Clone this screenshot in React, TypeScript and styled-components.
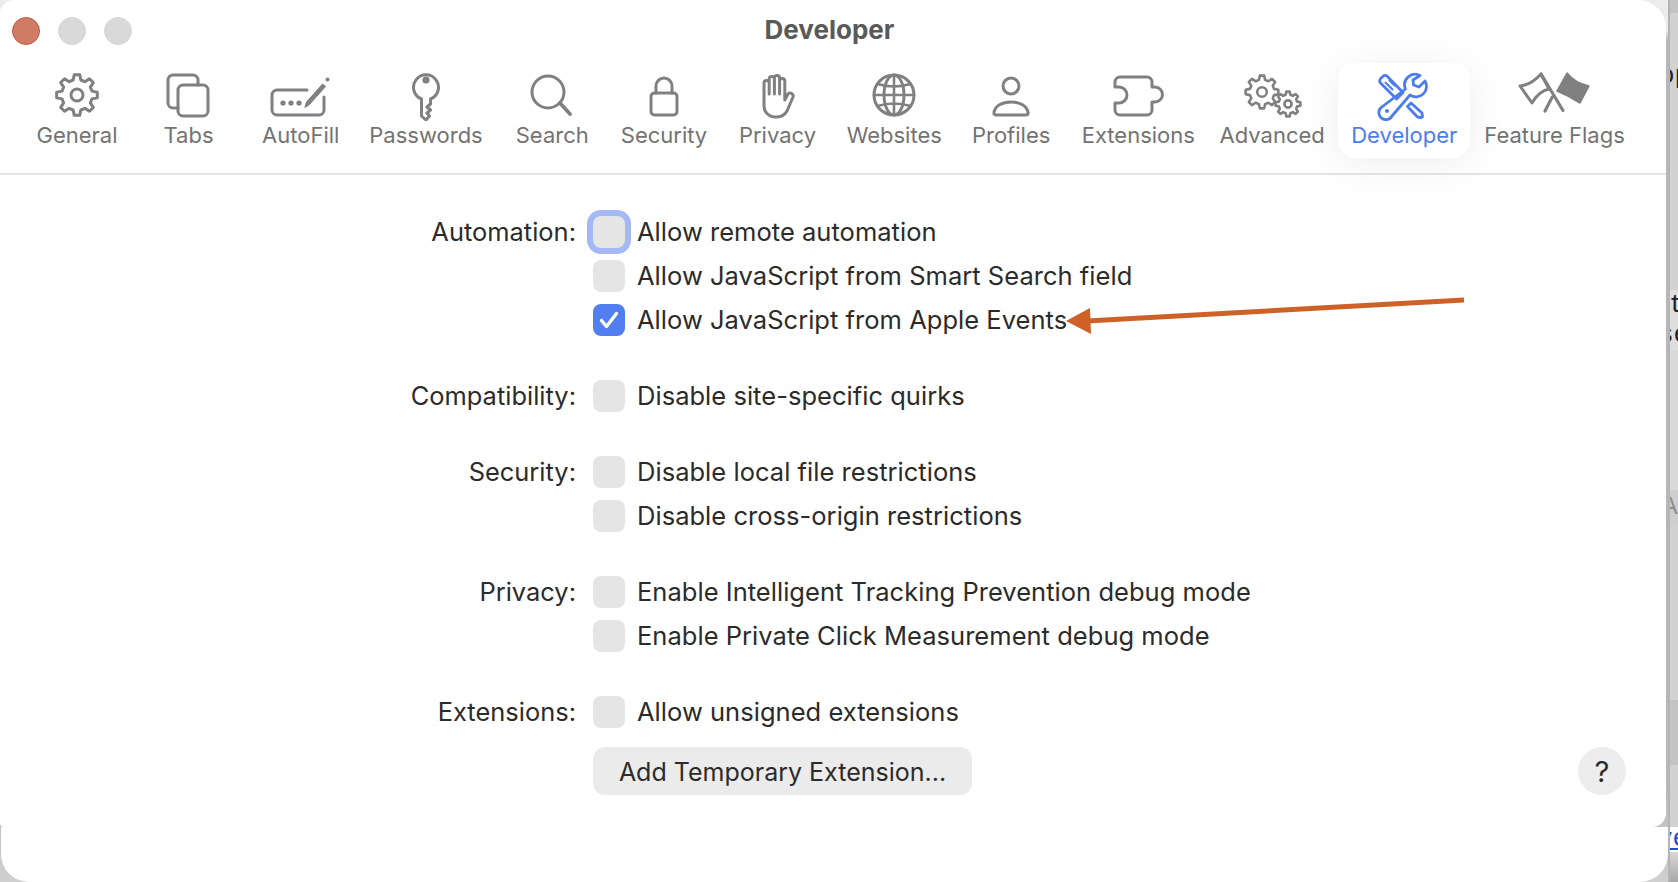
import styled, { createGlobalStyle } from 'styled-components'

const GlobalStyle = createGlobalStyle`
  html, body {
    margin: 0;
    padding: 0;
    width: 1678px;
    height: 882px;
    overflow: hidden;
    background: #d2d2d2;
    font-family: Inter, "Liberation Sans", sans-serif;
  }
`

function gearPath (cx: number, cy: number, rOut: number, rIn: number, teeth: number) {
  const step = (Math.PI * 2) / teeth
  const pts: string[] = []
  for (let i = 0; i < teeth; i++) {
    const a = i * step - Math.PI / 2
    const angles: [number, number][] = [
      [a - step * 0.32, rIn],
      [a - step * 0.17, rOut],
      [a + step * 0.17, rOut],
      [a + step * 0.32, rIn]
    ]
    angles.forEach(([t, r]) => pts.push(`${(cx + Math.cos(t) * r).toFixed(2)} ${(cy + Math.sin(t) * r).toFixed(2)}`))
  }
  return `M${pts.join(' L')} Z`
}

const icons: Record<string, React.ReactNode> = {
  General: (
    <>
      <path d={gearPath(32, 26, 20.5, 15.5, 8)} />
      <circle cx='32' cy='26' r='6' />
    </>
  ),
  Tabs: (
    <>
      <path d='M21 39 H16 a5 5 0 0 1 -5 -5 V11 a5 5 0 0 1 5 -5 H36 a5 5 0 0 1 5 5 V16' />
      <rect x='21' y='16' width='30' height='31' rx='5' />
    </>
  ),
  AutoFill: (
    <>
      <path d='M38 21 H8 a5 5 0 0 0 -5 5 V41 a5 5 0 0 0 5 5 H50 a5 5 0 0 0 5 -5 V28' />
      <path d='M36 38 l1.5 -5 l16 -18 l3 2.5 l-16 18 z' fill='currentColor' strokeWidth='1' />
      <circle cx='58.5' cy='10.5' r='2' fill='currentColor' stroke='none' />
      <circle cx='14' cy='34' r='2.6' fill='currentColor' stroke='none' />
      <circle cx='22' cy='34' r='2.6' fill='currentColor' stroke='none' />
      <circle cx='30' cy='34' r='2.6' fill='currentColor' stroke='none' />
    </>
  ),
  Passwords: (
    <>
      <path d='M27.5 30 A12.5 12.5 0 1 1 36.5 30 V35 L33 38 L36.5 41 L33 44 L35.5 47 L32 51 L27.5 47 Z' />
      <circle cx='32' cy='11' r='3.6' fill='currentColor' stroke='none' />
    </>
  ),
  Search: (
    <>
      <circle cx='28' cy='23' r='16' />
      <path d='M40 34 L50 45' strokeWidth='3.8' />
    </>
  ),
  Security: (
    <>
      <rect x='19' y='24' width='26' height='22' rx='3.5' />
      <path d='M24 24 V17 a8 8 0 0 1 16 0 V24' />
    </>
  ),
  Privacy: (
    <path d='M18 32 V14 a2.6 2.6 0 0 1 5.2 0 V25 M23.2 14 V10 a2.6 2.6 0 0 1 5.2 0 V25 M28.4 10 V9 a2.6 2.6 0 0 1 5.2 0 V25 M33.6 12 a2.6 2.6 0 0 1 5.2 0 V31 L42 25 a3 3 0 0 1 5 3 L41 42 a12 12 0 0 1 -10 6 H29 a11 11 0 0 1 -11 -11 V30' />
  ),
  Websites: (
    <>
      <circle cx='32' cy='26' r='20' />
      <ellipse cx='32' cy='26' rx='10' ry='20' />
      <path d='M32 6 V46 M12 26 H52 M15.5 15 Q32 20 48.5 15 M15.5 37 Q32 32 48.5 37' strokeWidth='2.6' />
    </>
  ),
  Profiles: (
    <>
      <circle cx='32' cy='17' r='8' />
      <path d='M17 46 h30 c1.5 0 2.4 -1 2 -2.5 C48 37 41 33 32 33 S16 37 15 43.5 c-.3 1.5 .5 2.5 2 2.5 z' />
    </>
  ),
  Extensions: (
    <path d='M14 8 H41 a5 5 0 0 1 5 5 V18 h3 a7.5 7.5 0 0 1 0 15 h-3 V41 a5 5 0 0 1 -5 5 H14 a5 5 0 0 1 -5 -5 V34 h4 a8 8 0 0 0 0 -16 h-4 V13 a5 5 0 0 1 5 -5 z' />
  ),
  Advanced: (
    <g strokeWidth='2.6'>
      <path d={gearPath(22, 23, 16.5, 12.5, 8)} />
      <circle cx='22' cy='23' r='4.8' />
      <path d={gearPath(48, 35, 12.5, 9.5, 8)} />
      <circle cx='48' cy='35' r='3.6' />
    </g>
  ),
  Developer: (
    <g strokeWidth='2.8'>
      <path d='M8.5 14 a3 3 0 0 1 0 -4.2 l2.5 -2.5 a3 3 0 0 1 4.2 0 L31 23.5 L24.5 30 Z' />
      <path d='M13.5 13.5 l7 7 M17.5 11.5 l5 5' strokeWidth='2' />
      <path d='M39 34 L35.5 37.5 L45.5 48 L49.5 48.5 a1.5 1.5 0 0 0 1 -1 L50 44 Z' />
      <path d='M48 6.5 A10.5 10.5 0 0 0 33.5 20 L10.5 37.5 A7 7 0 1 0 20 47 L38 26 A10.5 10.5 0 0 0 53 12 L47 18 L41.5 16 L41 11 Z' />
      <circle cx='15' cy='42' r='2' fill='currentColor' stroke='none' />
    </g>
  ),
  'Feature Flags': (
    <>
      <path d='M3 17 Q14 16 24 5 L32 20 Q22 22 15 34 Z' />
      <path d='M24 5 L46 41.5 M35 28.5 L28 42' strokeWidth='3.2' />
      <path d='M50 4 Q58 14 72 17 L63 34 Q52 27 40 22 Z' fill='currentColor' strokeWidth='1.5' />
    </>
  )
}

const tools = [
  { name: 'General', width: 112 },
  { name: 'Tabs', width: 111 },
  { name: 'AutoFill', width: 113.5 },
  { name: 'Passwords', width: 137 },
  { name: 'Search', width: 115.5 },
  { name: 'Security', width: 108 },
  { name: 'Privacy', width: 119 },
  { name: 'Websites', width: 114.5 },
  { name: 'Profiles', width: 119.3 },
  { name: 'Extensions', width: 135 },
  { name: 'Advanced', width: 132.7 },
  { name: 'Developer', width: 131.6, active: true },
  { name: 'Feature Flags', width: 169, iconWidth: 76 }
]

const groups = [
  {
    label: 'Automation:',
    options: [
      { text: 'Allow remote automation', focused: true },
      { text: 'Allow JavaScript from Smart Search field' },
      { text: 'Allow JavaScript from Apple Events', checked: true }
    ]
  },
  { label: 'Compatibility:', options: [{ text: 'Disable site-specific quirks' }] },
  {
    label: 'Security:',
    options: [{ text: 'Disable local file restrictions' }, { text: 'Disable cross-origin restrictions' }]
  },
  {
    label: 'Privacy:',
    options: [
      { text: 'Enable Intelligent Tracking Prevention debug mode' },
      { text: 'Enable Private Click Measurement debug mode' }
    ]
  }
]

const strip = [
  { height: 13, bg: '#c4c4c4' },
  { height: 49, bg: '#d2d2d2' },
  { height: 28, bg: '#d2d2d2', text: 'op', indent: -11 },
  { height: 200, bg: '#d2d2d2' },
  { height: 30, bg: '#dedede', text: 'te', indent: -1 },
  { height: 30, bg: '#dedede', text: 'se', indent: -12 },
  { height: 140, bg: '#d9d9d9' },
  { height: 35, bg: '#cecece', text: 'AI', faded: true, indent: -8 },
  { height: 175, bg: '#d2d2d2' },
  { height: 65, bg: '#c4c4c4' },
  { height: 62, bg: '#d2d2d2' },
  { height: 25, bg: '#ffffff', text: 've', link: true, indent: -13 },
  { height: 30, bg: 'linear-gradient(180deg, #d8d8d8, #a8a8a8)' }
]

export default function App () {
  return (
    <>
      <GlobalStyle />
      <Frame>
        <Column>
          <Window>
            <Toolbar>
              <TitleBar>
                <Lights>
                  <Light $red />
                  <Light />
                  <Light />
                </Lights>
                <Title>Developer</Title>
              </TitleBar>
              <Tools>
                {tools.map((tool) => (
                  <Tool key={tool.name} $width={tool.width} $active={tool.active}>
                    <ToolIcon width={tool.iconWidth || 64} height='52' viewBox={`0 0 ${tool.iconWidth || 64} 52`} $active={tool.active}>
                      {icons[tool.name]}
                    </ToolIcon>
                    <ToolLabel>{tool.name}</ToolLabel>
                  </Tool>
                ))}
              </Tools>
            </Toolbar>
            <Content>
              {groups.map((group) => (
                <Group key={group.label}>
                  <GroupLabel>{group.label}</GroupLabel>
                  <Options>
                    {group.options.map((option) => (
                      <Option key={option.text}>
                        <Checkbox $checked={option.checked} $focused={option.focused}>
                          {option.checked && (
                            <svg width='32' height='32' viewBox='0 0 32 32' fill='none'>
                              <path d='M8.5 16.5 L13.5 22.5 L23.5 9.5' stroke='#fff' strokeWidth='3.4' strokeLinecap='round' strokeLinejoin='round' />
                            </svg>
                          )}
                        </Checkbox>
                        <OptionText>{option.text}</OptionText>
                      </Option>
                    ))}
                  </Options>
                </Group>
              ))}
              <Group>
                <GroupLabel>Extensions:</GroupLabel>
                <Options>
                  <Option>
                    <Checkbox />
                    <OptionText>Allow unsigned extensions</OptionText>
                  </Option>
                  <Actions>
                    <AddButton>Add Temporary Extension...</AddButton>
                    <HelpButton>?</HelpButton>
                  </Actions>
                </Options>
              </Group>
            </Content>
            <Arrow width='420' height='40' viewBox='0 0 420 40'>
              <path d='M22 24 L399 3' stroke='#cd6128' strokeWidth='5' />
              <path d='M1 24 L25 11 L26 37 Z' fill='#cd6128' />
            </Arrow>
          </Window>
          <LowerSheet />
        </Column>
        <Strip>
          {strip.map((row, i) => (
            <StripRow key={i} $height={row.height} $bg={row.bg} $faded={row.faded} $link={row.link} $indent={row.indent}>
              {row.text}
            </StripRow>
          ))}
        </Strip>
      </Frame>
    </>
  )
}

const Frame = styled.div`
  display: flex;
  width: 1678px;
  height: 882px;
  overflow: hidden;
`

const Column = styled.div`
  display: flex;
  flex-direction: column;
  width: 1668px;
  flex-shrink: 0;
  background: linear-gradient(180deg, #ececec 0, #ececec 30px, #b8b8b8 40px, #b8b8b8 780px, #d0d0d0 100%);
`

const Window = styled.div`
  position: relative;
  width: 1666px;
  height: 827px;
  background: #fff;
  border-radius: 14px 28px 14px 4px;
`

const LowerSheet = styled.div`
  height: 55px;
  margin-left: 1px;
  background: #fff;
  border-radius: 0 0 28px 28px;
`

const Toolbar = styled.header`
  height: 173px;
  border-bottom: 2px solid #e6e6e6;
`

const TitleBar = styled.div`
  display: grid;
  grid-template-columns: 1fr auto 1fr;
  align-items: center;
  height: 62px;
  padding: 0 19px 0 12px;
`

const Lights = styled.div`
  display: flex;
  gap: 18px;
`

const Light = styled.span<{ $red?: boolean }>`
  box-sizing: border-box;
  width: 28px;
  height: 28px;
  border-radius: 50%;
  background: ${(p) => (p.$red ? '#cf7c65' : '#d9d9d9')};
  border: 1px solid ${(p) => (p.$red ? '#c2573f' : '#d6d6d6')};
`

const Title = styled.h1`
  margin: 0 0 3px;
  font-size: 26px;
  font-weight: 700;
  color: #595959;
`

const Tools = styled.nav`
  display: flex;
  padding: 1px 0 0 21px;
`

const Tool = styled.div<{ $width: number; $active?: boolean }>`
  position: relative;
  box-sizing: border-box;
  display: flex;
  flex-direction: column;
  align-items: center;
  flex-shrink: 0;
  width: ${(p) => p.$width}px;
  height: 95px;
  padding-top: 6px;
  border-radius: 16px;
  color: ${(p) => (p.$active ? '#4c7df0' : '#737373')};
  background: ${(p) => (p.$active ? '#fff' : 'transparent')};
  box-shadow: ${(p) => (p.$active ? '0 6px 40px rgba(0, 0, 0, 0.07)' : 'none')};
`

const ToolIcon = styled.svg<{ $active?: boolean }>`
  display: block;
  fill: none;
  color: ${(p) => (p.$active ? '#4c7df0' : '#808080')};
  stroke: currentColor;
  stroke-width: 3;
  stroke-linecap: round;
  stroke-linejoin: round;
`

const ToolLabel = styled.span`
  margin-top: 1px;
  font-size: 22px;
  line-height: 26px;
  white-space: nowrap;
`

const Content = styled.main`
  display: flex;
  flex-direction: column;
  gap: 32px;
  padding-top: 35px;
  font-size: 25.5px;
  letter-spacing: 0.03px;
  color: #2b2b2b;
`

const Group = styled.section`
  display: grid;
  grid-template-columns: 576px 1fr;
  column-gap: 17px;
`

const GroupLabel = styled.div`
  height: 44px;
  line-height: 44px;
  font-size: 25.4px;
  text-align: right;
`

const Options = styled.div`
  display: flex;
  flex-direction: column;
`

const Option = styled.label`
  display: flex;
  align-items: center;
  gap: 12px;
  height: 44px;
  white-space: nowrap;
`

const OptionText = styled.span`
  align-self: flex-start;
  line-height: 43px;
`

const Checkbox = styled.span<{ $checked?: boolean; $focused?: boolean }>`
  display: block;
  flex-shrink: 0;
  width: 32px;
  height: 32px;
  border-radius: 8px;
  background: ${(p) => (p.$checked ? '#527ff0' : '#e5e5e5')};
  box-shadow: ${(p) => (p.$focused ? '0 0 0 6px #a3b8f5' : 'none')};
`

const Actions = styled.div`
  display: flex;
  align-items: center;
  justify-content: space-between;
  margin-top: 13px;
  padding-right: 40px;
`

const AddButton = styled.button`
  width: 379px;
  height: 48px;
  padding: 1px 0 0;
  border: 0;
  border-radius: 12px;
  background: #ebebeb;
  font: inherit;
  font-size: 25px;
  color: inherit;
`

const HelpButton = styled.button`
  width: 48px;
  height: 48px;
  padding: 0;
  border: 0;
  border-radius: 50%;
  background: #ededed;
  font: 400 29px Inter, "Liberation Sans", sans-serif;
  color: #2b2b2b;
`

const Arrow = styled.svg`
  position: absolute;
  left: 1065px;
  top: 297px;
`

const Strip = styled.aside`
  box-sizing: border-box;
  display: flex;
  flex-direction: column;
  width: 10px;
  overflow: hidden;
  border-left: 2px solid #b4b4b4;
`

const StripRow = styled.div<{ $height: number; $bg: string; $faded?: boolean; $link?: boolean; $indent?: number }>`
  height: ${(p) => p.$height}px;
  flex-shrink: 0;
  background: ${(p) => p.$bg};
  font: 26px/${(p) => p.$height}px "Liberation Mono", monospace;
  text-indent: ${(p) => p.$indent || 0}px;
  white-space: nowrap;
  color: ${(p) => (p.$link ? '#1a4fd6' : p.$faded ? '#8f8f8f' : '#222')};
  text-decoration: ${(p) => (p.$link ? 'underline' : 'none')};
`
